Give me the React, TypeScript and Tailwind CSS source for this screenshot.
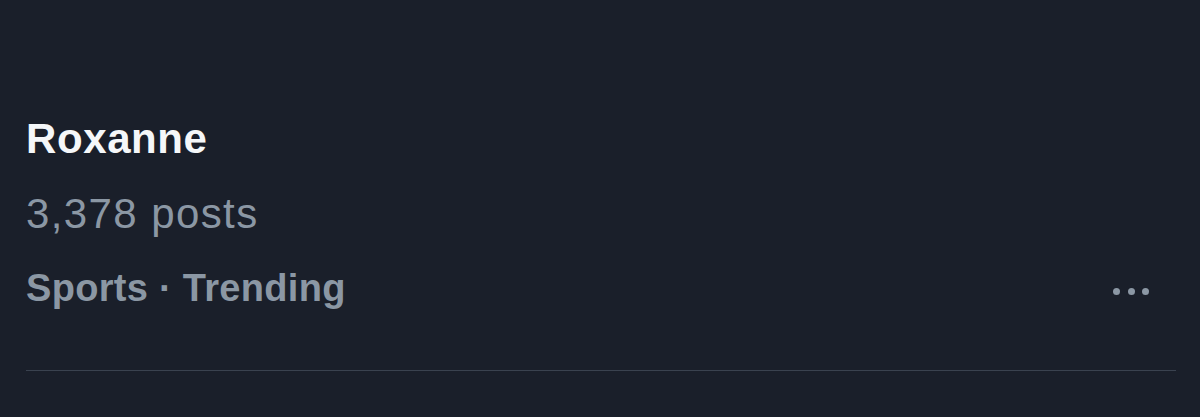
export default function App() {
  return (
    <div className="w-[1200px] h-[417px] bg-[#1a1f2a] overflow-hidden font-['Liberation_Sans',Arial,sans-serif]">
      <div className="pl-[26px] pr-[24px] pt-[101px]">
        <div className="text-[42px] leading-[75px] font-bold text-[#f5f7f9] tracking-[0.6px]">Roxanne</div>
        <div className="text-[42px] leading-[75px] text-[#8b97a4] tracking-[1.4px]">3,378 posts</div>
        <div className="flex items-center justify-between">
          <div className="text-[38px] leading-[75px] font-bold text-[#8b97a4] tracking-[0.3px]">
            Sports · Trending
          </div>
          <div className="flex items-center gap-[7.5px] mr-[27px] mt-[5px]">
            <span className="w-[7px] h-[7px] rounded-full bg-[#8b97a4]" />
            <span className="w-[7px] h-[7px] rounded-full bg-[#8b97a4]" />
            <span className="w-[7px] h-[7px] rounded-full bg-[#8b97a4]" />
          </div>
        </div>
        <div className="mt-[44px] h-px bg-[#3a424f]" />
      </div>
    </div>
  );
}
